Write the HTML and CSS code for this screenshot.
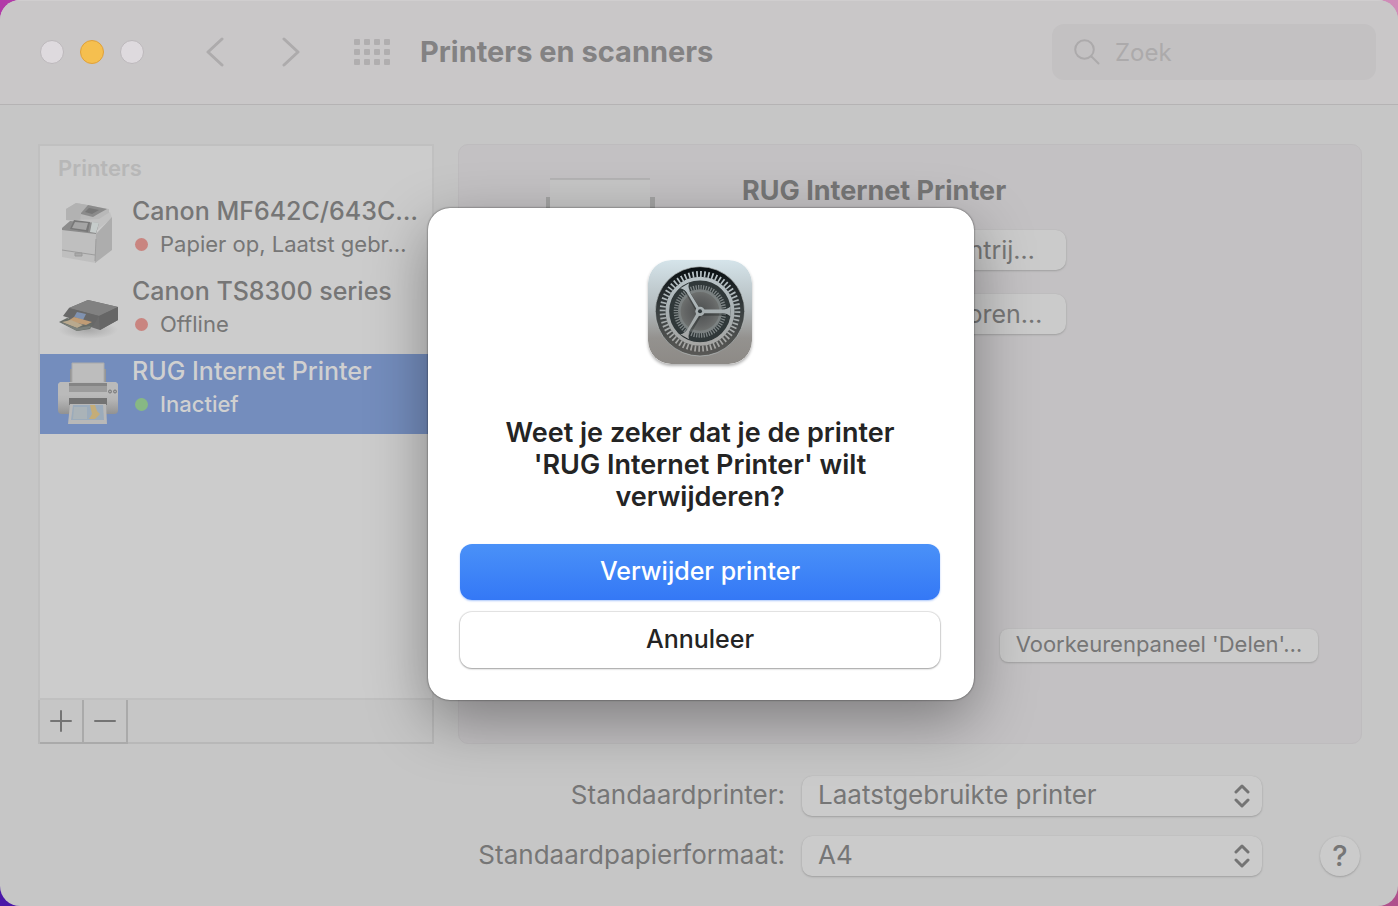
FILE: index.html
```html
<!DOCTYPE html>
<html lang="nl">
<head>
<meta charset="utf-8">
<title>Printers en scanners</title>
<link rel="stylesheet" href="styles.css">
</head>
<body>
<div class="window">
  <header class="toolbar">
    <div class="lights">
      <button class="light" aria-label="Sluit"></button>
      <button class="light light-active" aria-label="Minimaliseer"></button>
      <button class="light" aria-label="Zoom"></button>
    </div>
    <nav class="nav">
      <button class="icon-button" aria-label="Vorige"><svg width="18" height="30" viewBox="0 0 18 30"><path d="M16 2 2 15 16 28"/></svg></button>
      <button class="icon-button" aria-label="Volgende"><svg width="18" height="30" viewBox="0 0 18 30"><path d="M2 2 16 15 2 28"/></svg></button>
    </nav>
    <button class="icon-button" aria-label="Toon alles">
      <svg class="dots" width="36" height="26" viewBox="0 0 36 26">
        <defs><g id="dot-row"><rect width="6" height="6" rx="1"/><rect x="10" width="6" height="6" rx="1"/><rect x="20" width="6" height="6" rx="1"/><rect x="30" width="6" height="6" rx="1"/></g></defs>
        <use href="#dot-row"/><use href="#dot-row" y="10"/><use href="#dot-row" y="20"/>
      </svg>
    </button>
    <h1 class="title">Printers en scanners</h1>
    <label class="search">
      <svg width="26" height="26" viewBox="0 0 26 26"><circle cx="10.500" cy="10.500" r="9.300"/><path d="M17.500 17.500 24.500 24.500"/></svg>
      <input type="search" placeholder="Zoek" aria-label="Zoek">
    </label>
  </header>

  <main class="content">
    <section class="columns">
      <aside class="sidebar">
        <div class="list">
          <h2 class="list-title">Printers</h2>
          <ul class="printers">
            <li class="printer">
              <svg class="printer-icon" width="64" height="64" viewBox="0 0 64 64">
                <path d="M9 9 19 3 52 9 52 17 36 22 9 20Z" fill="#b9b9b9"/>
                <path d="M9 9 19 3 31 5 24 14 23 21 9 20Z" fill="#b2b2b2"/>
                <path d="M24 13 31 5 50 9 41 14 36 17 24 14Z" fill="#8b8b8b"/>
                <path d="M32 8 42 10 35 14 28 12Z" fill="#777"/>
                <path d="M18 20 42 19 53 12 55 18 40 30 16 28Z" fill="#c2c2c2"/>
                <path d="M5 28 40 34 39 63 5 57Z" fill="#bfbfbf"/>
                <path d="M39 34 55 17 55 50 38 63Z" fill="#adadad"/>
                <path d="M5 28 13 21 42 23 39 34 5 30Z" fill="#8b8b8b"/>
                <path d="M17 20 33 22 31 32 13 29Z" fill="#777"/>
                <path d="M18 22 31 23 29 30 15 28Z" fill="#a5a5a5"/>
                <path d="M35 22 42 23 39 33 33 32Z" fill="#c6cccb"/>
                <path d="M5 50 38 55M39 39 38 61" stroke="#9d9d9d" fill="none"/>
                <path d="M18 53h7v3h-7z" fill="#aaa" stroke="#999"/>
              </svg>
              <div class="printer-text"><div class="printer-name">Canon MF642C/643C…</div><div class="status"><span class="status-dot"></span>Papier op, Laatst gebr…</div></div>
            </li>
            <li class="printer">
              <svg class="printer-icon" width="64" height="64" viewBox="0 0 64 64">
                <defs><radialGradient id="ground"><stop stop-color="#a8a8a8"/><stop offset="1" stop-color="#ccc"/></radialGradient></defs>
                <ellipse cx="31" cy="50" rx="30" ry="9" fill="url(#ground)"/>
                <path d="M12 28 31 20 61 27 61 40 43 50 12 40Z" fill="#6c6c6c"/>
                <path d="M12 28 31 20 61 27 42 36Z" fill="#818181"/>
                <path d="M42 36 61 27 61 40 43 50Z" fill="#666"/>
                <path d="M12 28 42 36 36 46 6 36Z" fill="#686868"/>
                <path d="M20 32 29 34 26 40 17 37Z" fill="#8092b0"/>
                <path d="M2 42 10 38 36 44 33 49 20 51Z" fill="#686d68"/>
                <path d="M11 41 17 37 35 42 29 45Z" fill="#c09c75"/>
                <path d="M5 42 14 40 26 45 20 48Z" fill="#b9a98e"/>
                <path d="M3 42 20 48 33 46 34 48 20 51Z" fill="#7c817c"/>
              </svg>
              <div class="printer-text"><div class="printer-name">Canon TS8300 series</div><div class="status"><span class="status-dot"></span>Offline</div></div>
            </li>
            <li class="printer selected">
              <svg class="printer-icon" width="64" height="64" viewBox="0 0 64 64">
                <defs><linearGradient id="shell" x2="0" y2="1"><stop stop-color="#c5c5c5"/><stop offset=".55" stop-color="#b5b5b5"/><stop offset="1" stop-color="#929292"/></linearGradient></defs>
                <path d="M13 9h36v14H13z" fill="#969696"/>
                <path d="M15 3h32v25H15z" fill="#bdbdbd" stroke="#aaa"/>
                <rect x="1" y="22" width="60" height="32" rx="4" fill="url(#shell)"/>
                <path d="M1 35V26q0-4 4-4h52q4 0 4 4v9z" fill="#bababa"/>
                <path d="M12 23h38v9H12z" fill="#858585"/><path d="M12 26h38v6H12z" fill="#9c9c9c"/>
                <path d="M12 38h38v7H12z" fill="#737373"/>
                <path d="M13 44h36l1 20H11z" fill="#b8b8b8"/>
                <path d="M16 45h30l1 15H14z" fill="#9babbb"/><path d="M17 47h13v12H16z" fill="#aab3b8"/>
                <path d="M33 45h5l2 6 3 3-5 5h-6l3-5Z" fill="#c5ad78"/>
                <circle cx="53" cy="31.500" r="1.500" fill="#aaa" stroke="#777"/><circle cx="58" cy="31.500" r="1.500" fill="#aaa" stroke="#777"/>
              </svg>
              <div class="printer-text"><div class="printer-name">RUG Internet Printer</div><div class="status"><span class="status-dot ready"></span>Inactief</div></div>
            </li>
          </ul>
        </div>
        <div class="list-actions">
          <button class="list-button" aria-label="Voeg toe"><svg width="22" height="22" viewBox="0 0 22 22"><path d="M1 11h20M11 1v20"/></svg></button>
          <button class="list-button" aria-label="Verwijder"><svg width="22" height="22" viewBox="0 0 22 22"><path d="M1 11h20"/></svg></button>
        </div>
      </aside>

      <section class="panel">
        <svg class="panel-picture" width="110" height="120" viewBox="0 0 110 120">
          <path d="M0 19h6v30H0zM103 19h6v30h-6z" fill="#a3a3a3"/><path d="M4 1h100v60H4z" fill="#c6c6c6"/><path d="M4 1h100" stroke="#a2a2a2"/>
          <rect y="50" width="110" height="60" rx="8" fill="#b5b5b5"/>
        </svg>
        <div class="details">
          <h2 class="details-title">RUG Internet Printer</h2>
          <button class="push">Open afdrukwachtrij…</button>
          <button class="push">Opties en toebehoren…</button>
        </div>
        <button class="push small">Voorkeurenpaneel 'Delen'…</button>
      </section>
    </section>

    <form class="defaults">
      <label for="printer">Standaardprinter:</label>
      <div class="select-box"><select id="printer"><option>Laatstgebruikte printer</option></select><svg width="18" height="24" viewBox="0 0 18 24"><path d="M3 8 9 2 15 8M3 16 9 22 15 16"/></svg></div>
      <span></span>
      <label for="paper">Standaardpapierformaat:</label>
      <div class="select-box"><select id="paper"><option>A4</option></select><svg width="18" height="24" viewBox="0 0 18 24"><path d="M3 8 9 2 15 8M3 16 9 22 15 16"/></svg></div>
      <button class="help" type="button" aria-label="Help">?</button>
    </form>
  </main>
</div>

<div class="overlay">
  <div class="alert" role="alertdialog" aria-labelledby="alert-title">
    <svg class="gear" width="104" height="104" viewBox="0 0 312 312">
      <defs>
        <linearGradient id="tile" x2="0" y2="1"><stop stop-color="#d5e4ea"/><stop offset=".45" stop-color="#b4bcbf"/><stop offset=".75" stop-color="#94928f"/><stop offset="1" stop-color="#8d8a86"/></linearGradient>
        <linearGradient id="well" x2="0" y2="1"><stop stop-color="#080e11"/><stop offset=".5" stop-color="#3a4041"/><stop offset="1" stop-color="#5a5956"/></linearGradient>
        <linearGradient id="metal" gradientUnits="userSpaceOnUse" x1="0" y1="40" x2="0" y2="270"><stop stop-color="#bbc6ca"/><stop offset=".5" stop-color="#a7afb1"/><stop offset="1" stop-color="#a5a4a1"/></linearGradient>
        <radialGradient id="hub"><stop stop-color="#4c4f4f"/><stop offset=".7" stop-color="#636565"/><stop offset="1" stop-color="#707371"/></radialGradient>
      </defs>
      <rect width="312" height="312" rx="70" fill="url(#tile)"/>
      <circle cx="156" cy="154" r="134" fill="url(#well)" stroke="#b9c0c0" stroke-width="2"/>
      <circle cx="156" cy="154" r="112" fill="none" stroke="url(#metal)" stroke-width="18" pathLength="240" stroke-dasharray="1.700 2.300"/>
      <circle cx="156" cy="154" r="93" fill="#303839"/>
      <circle cx="156" cy="154" r="72" fill="none" stroke="#7f8687" stroke-width="14" pathLength="192" stroke-dasharray="1.600 1.600"/>
      <circle cx="156" cy="154" r="62" fill="url(#hub)" stroke="#7b8181" stroke-width="8"/>
      <g fill="none" stroke="#15191a" stroke-opacity=".35" stroke-width="14"><path d="M156 160H248M156 160 109 80M156 160 109 240"/></g>
      <circle cx="156" cy="154" r="98" fill="none" stroke="url(#metal)" stroke-width="11"/>
      <path d="M156 148.500h66q16 0 26-10v31q-10-10-26-10h-66zM151 157 121 105q-10-18-24-20l26-15q-4 14 4 30l33 54zM160 157 127 208q-8 16-4 30l-26-15q14-2 24-20l30-52z" fill="url(#metal)"/>
      <circle cx="156" cy="154" r="14" fill="url(#metal)"/>
      <circle cx="156" cy="154" r="6" fill="#30383a"/>
    </svg>
    <h2 class="alert-title" id="alert-title">Weet je zeker dat je de printer<br>'RUG Internet Printer' wilt<br>verwijderen?</h2>
    <button class="alert-button primary">Verwijder printer</button>
    <button class="alert-button">Annuleer</button>
  </div>
</div>
</body>
</html>
```
FILE: styles.css
```css
* { box-sizing: border-box; }
body {
  margin: 0;
  min-height: 100vh;
  position: relative;
  overflow: hidden;
  background: linear-gradient(90deg, #b23aa8, #d08cb8) top / 100% 50% no-repeat, linear-gradient(90deg, #4a18a8, #b0508c) bottom / 100% 50% no-repeat;
  font-family: Inter, "Liberation Sans", sans-serif;
  font-size: 25px;
  line-height: 32px;
  color: #767676;
}
h1, h2, ul { margin: 0; padding: 0; }
button, input, select { font: inherit; color: inherit; border: 0; padding: 0; background: none; }

.window {
  min-height: 100vh;
  display: flex;
  flex-direction: column;
  border-radius: 20px;
  overflow: hidden;
  background: #c6c6c6;
}

.toolbar {
  display: flex;
  align-items: center;
  height: 105px;
  padding: 0 22px 2px 40px;
  background: #c9c7c8;
  border-top: 1px solid #d0cecf;
  border-bottom: 1px solid #b5b3b4;
}
.lights { display: flex; gap: 16px; }
.light { width: 24px; height: 24px; border-radius: 50%; background: #dedade; border: 1px solid #bcb8bb; }
.light-active { background: #f5bf4f; border-color: #dfa13b; }
.nav { display: flex; gap: 58px; margin: 0 54px 0 62px; }
.icon-button { display: flex; }
.icon-button svg { fill: none; stroke: #adabac; stroke-width: 3; stroke-linecap: round; stroke-linejoin: round; }
.icon-button .dots { fill: #b0aeaf; stroke: none; }
.title { flex: 1; margin-left: 30px; font-size: 29px; font-weight: 700; line-height: 36px; color: #838283; }
.search {
  display: flex;
  align-items: center;
  gap: 15px;
  width: 324px;
  height: 56px;
  padding: 0 22px;
  border-radius: 12px;
  background: #c3c1c2;
}
.search svg { flex: none; fill: none; stroke: #acaaab; stroke-width: 2; stroke-linecap: round; }
.search input { width: 100%; padding-top: 2px; outline: 0; font-size: 24px; }
.search input::placeholder { color: #acaaab; opacity: 1; }

.content { flex: 1; display: flex; flex-direction: column; gap: 32px; padding: 39px 36px 30px 38px; }
.columns { flex: 1; display: grid; grid-template-columns: 396px 1fr; gap: 24px; }
.sidebar { display: flex; flex-direction: column; }
.list { flex: 1; background: #ccc; border: 2px solid #c0c0c0; }
.list-title { padding: 6px 18px 10px; font-size: 22px; font-weight: 600; color: #b7b7b7; }
.printers { list-style: none; }
.printer { display: flex; align-items: center; gap: 11px; height: 80px; padding: 0 0 4px 17px; }
.printer-icon { flex: none; }
.printer-name { font-weight: 500; line-height: 34px; white-space: nowrap; }
.printer-text { padding-bottom: 10px; }
.status { display: flex; align-items: center; gap: 12px; font-size: 22px; line-height: 32px; white-space: nowrap; padding-left: 3px; }
.status-dot { width: 13px; height: 13px; border-radius: 50%; background: #c98580; }
.ready { background: #87b884; }
.selected { background: #748dbd; color: #d0d0d0; }
.selected .status { font-weight: 500; }
.list-actions { display: flex; height: 44px; border: 2px solid #b8b8b8; border-top: 0; }
.list-button { display: flex; align-items: center; justify-content: center; width: 44px; margin-bottom: -2px; border-right: 2px solid #aaa; border-bottom: 2px solid #aaa; }
.list-button svg { fill: none; stroke: #747474; stroke-width: 2; stroke-linecap: round; }

.panel {
  display: grid;
  grid-template-columns: 110px 1fr;
  grid-template-rows: 1fr auto;
  column-gap: 86px;
  padding: 33px 43px 81px 87px;
  background: #c3c1c3;
  border: 1px solid #bebcbe;
  border-radius: 10px;
}
.details { display: flex; flex-direction: column; align-items: flex-start; gap: 24px; }
.details-title { margin-bottom: 2px; font-size: 27px; font-weight: 700; line-height: 26px; }
.push {
  width: 324px;
  height: 40px;
  border-radius: 10px;
  background: #cbcbcb;
  box-shadow: 0 1px 2px #a0a0a0, 0 0 1px #b0b0b0;
}
.small { grid-column: 2; justify-self: end; width: 318px; height: 33px; padding-bottom: 3px; border-radius: 8px; font-size: 22px; line-height: 28px; }

.defaults { display: grid; grid-template-columns: 1fr 460px 98px; gap: 20px 0; padding-right: 2px; align-items: center; font-size: 26px; }
.defaults label { padding: 0 17px 2px 0; text-align: right; }
.select-box { position: relative; }
.select-box select {
  appearance: none;
  display: block;
  width: 100%;
  height: 40px;
  padding: 0 40px 2px 16px;
  border-radius: 10px;
  background: #cbcbcb;
  box-shadow: 0 1px 2px #a0a0a0, 0 0 1px #b0b0b0;
}
.select-box svg { position: absolute; right: 11px; top: 8px; fill: none; stroke: #747474; stroke-width: 3; stroke-linecap: round; stroke-linejoin: round; pointer-events: none; }
.help { justify-self: end; width: 40px; height: 40px; border-radius: 50%; font-size: 29px; font-weight: 500; background: #cbcbcb; box-shadow: 0 1px 2px #a0a0a0, 0 0 1px #b0b0b0; }

.overlay { position: absolute; inset: 0; display: flex; align-items: center; justify-content: center; padding: 2px 0 0 4px; }
.alert {
  display: flex;
  flex-direction: column;
  align-items: center;
  gap: 12px;
  width: 546px;
  padding: 52px 34px 32px 32px;
  border-radius: 22px;
  background: #fff;
  color: #242424;
  box-shadow: 0 0 2px rgba(0, 0, 0, .7), 0 20px 60px rgba(0, 0, 0, .36);
}
.gear { border-radius: 23px; box-shadow: 0 2px 3px rgba(0, 0, 0, .3); }
.alert-title { margin: 41px 0 19px; font-size: 27px; font-weight: 600; line-height: 32px; text-align: center; }
.alert-button {
  width: 100%;
  height: 56px;
  padding-bottom: 2px;
  border-radius: 12px;
  background: #fff;
  font-weight: 500;
  box-shadow: 0 0 1px 1px rgba(0, 0, 0, .11), 0 1px 2px rgba(0, 0, 0, .3);
}
.primary { background: linear-gradient(#4a91f8, #3478f6); color: #fff; box-shadow: 0 1px 2px rgba(52, 120, 246, .4); }
```
